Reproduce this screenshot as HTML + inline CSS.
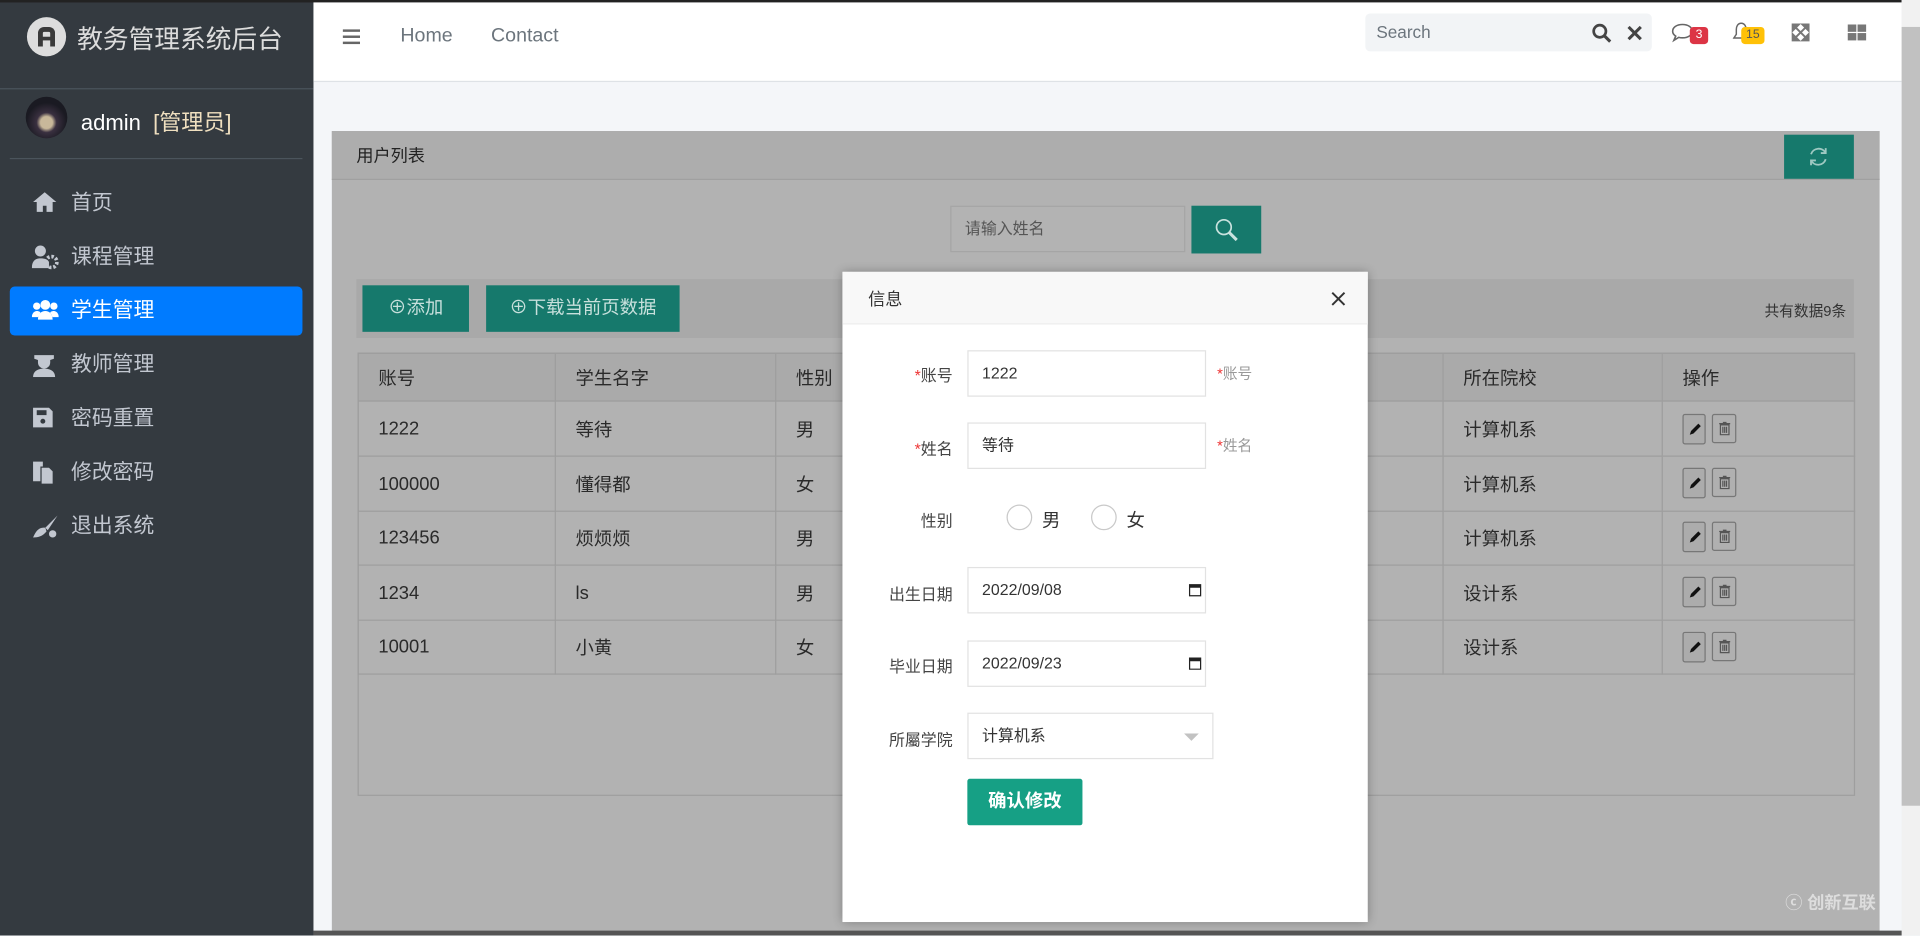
<!DOCTYPE html>
<html><head><meta charset="utf-8"><style>
*{box-sizing:border-box;margin:0;padding:0}
html,body{width:1920px;height:935px;overflow:hidden;background:#f4f6f9}
body{font-family:"Liberation Sans","Noto Sans CJK SC",sans-serif}
#w{position:absolute;left:0;top:0;width:1568px;height:764px;transform:scale(1.22449);transform-origin:0 0;background:#f4f6f9;overflow:hidden}
.a{position:absolute}
.side{left:0;top:0;width:256px;height:764px;background:#343a40;border-top:2px solid #222}
.nav{color:#c2c7d0;font-size:17px;left:8px;width:239px;height:40px;line-height:40px;padding-left:50px}
.nav svg{position:absolute;left:18px;top:10px}
.act{background:#007bff;color:#fff;border-radius:4px}
td,th{border:1px solid #9e9e9e;text-align:left;padding-left:16px;font-size:15px;color:#2a2a2a;font-weight:normal}
.lab{font-size:13px;color:#444;text-align:right;width:90px;left:0}
.inp{left:102px;width:195px;height:38px;border:1px solid #e2e2e2;font-size:13px;color:#333;line-height:36px;padding-left:11px;background:#fff}
.ob{width:20px;height:24px;border:1px solid #777;border-radius:2px;background:#b0b0b0}
</style></head><body><div id="w">
<div class="a side">
 <div class="a" style="left:22px;top:12px;width:32px;height:32px;border-radius:50%;background:#ddd"><div class="a" style="left:9px;top:8px;width:14px;height:16px;border:4px solid #3a3a3a;border-bottom:none;border-radius:5px 5px 0 0"></div><div class="a" style="left:10px;top:16px;width:12px;height:3px;background:#3a3a3a"></div></div>
 <div class="a" style="left:63px;top:14px;font-size:21px;color:#dcdcdc">教务管理系统后台</div>
 <div class="a" style="left:0;top:70px;width:256px;height:1px;background:#4b545c"></div>
 <div class="a" style="left:21px;top:77px;width:34px;height:34px;border-radius:50%;background:radial-gradient(circle at 50% 62%,#c8b89a 0 18%,#3a3040 30%,#1a1a22 60%)"></div>
 <div class="a" style="left:66px;top:84px;font-size:18px;color:#fff">admin&nbsp;&nbsp;<span style="color:#f0e0c0">[管理员]</span></div>
 <div class="a" style="left:8px;top:127px;width:239px;height:1px;background:#4b545c"></div>
 <div class="a nav" style="top:144px"><svg width="21" height="18" viewBox="0 0 21 18"><path d="M10.5 1L1 9h3v8h5v-5h3v5h5V9h3z" fill="#c2c7d0"/></svg>首页</div>
 <div class="a nav" style="top:188px"><svg width="22" height="20" viewBox="0 0 22 20"><circle cx="7" cy="5" r="4.5" fill="#c2c7d0"/><path d="M0 19c0-6 3-8 7-8s6 1 7 3v5z" fill="#c2c7d0"/><circle cx="16" cy="14" r="4.5" fill="none" stroke="#c2c7d0" stroke-width="3" stroke-dasharray="2 1.5"/></svg>课程管理</div>
 <div class="a nav act" style="top:232px"><svg width="22" height="18" viewBox="0 0 22 18"><circle cx="11" cy="5" r="4" fill="#fff"/><circle cx="4" cy="6" r="3" fill="#fff"/><circle cx="18" cy="6" r="3" fill="#fff"/><path d="M5 17c0-5 3-7 6-7s6 2 6 7zM0 15c0-3 2-5 4-5s3 1 3 1l-2 4zM22 15c0-3-2-5-4-5s-3 1-3 1l2 4z" fill="#fff"/></svg>学生管理</div>
 <div class="a nav" style="top:276px"><svg width="20" height="20" viewBox="0 0 20 20"><path d="M2 2h16v3l-3 1v2a5 5 0 0 1-10 0V6L2 5z" fill="#c2c7d0"/><path d="M1 20c0-5 4-7 9-7s9 2 9 7z" fill="#c2c7d0"/></svg>教师管理</div>
 <div class="a nav" style="top:320px"><svg width="18" height="18" viewBox="0 0 18 18"><path d="M1 1h13l3 3v13H1z" fill="#c2c7d0"/><rect x="4" y="3" width="8" height="4" fill="#343a40"/><circle cx="9" cy="12" r="2" fill="#343a40"/></svg>密码重置</div>
 <div class="a nav" style="top:364px"><svg width="18" height="20" viewBox="0 0 18 20"><path d="M1 1h8v4h-2v12H1z" fill="#c2c7d0"/><path d="M8 6h6l3 3v10H8z" fill="#c2c7d0"/></svg>修改密码</div>
 <div class="a nav" style="top:408px"><svg width="22" height="20" viewBox="0 0 22 20"><path d="M21 1L11 11l2 2z" fill="#c2c7d0"/><path d="M1 19c2-5 5-9 10-8l1 3c-3 4-7 5-11 5z" fill="#c2c7d0"/><circle cx="17" cy="16" r="3" fill="#c2c7d0"/></svg>退出系统</div>
</div>
<div class="a" style="left:256px;top:0;width:1297px;height:2px;background:#222"></div>
<div class="a" style="left:256px;top:2px;width:1297px;height:65px;background:#fff;border-bottom:1px solid #dee2e6">
 <div class="a" style="left:24px;top:22px;width:14px;height:2px;background:#666;box-shadow:0 5px #666,0 10px #666"></div>
 <div class="a" style="left:71px;top:19px;font-size:16px;color:#6c757d">Home</div>
 <div class="a" style="left:145px;top:19px;font-size:16px;color:#6c757d">Contact</div>
 <div class="a" style="left:859px;top:9px;width:234px;height:31px;background:#f2f4f6;border-radius:4px"><span class="a" style="left:9px;top:7px;font-size:14px;color:#6c757d">Search</span>
  <svg class="a" style="left:185px;top:8px" width="16" height="16" viewBox="0 0 16 16"><circle cx="6.5" cy="6.5" r="5" fill="none" stroke="#444" stroke-width="2.2"/><path d="M10 10l5 5" stroke="#444" stroke-width="2.5"/></svg>
  <svg class="a" style="left:214px;top:10px" width="12" height="12" viewBox="0 0 12 12"><path d="M1 1l10 10M11 1L1 11" stroke="#444" stroke-width="2.5"/></svg></div>
 <svg class="a" style="left:1109px;top:17px" width="18" height="16" viewBox="0 0 18 16"><path d="M9 1C4 1 1 3.5 1 6.5c0 1.8 1 3 2.5 4L2 14l4-2.5c1 .3 2 .4 3 .4 5 0 8-2.5 8-5.4S14 1 9 1z" fill="none" stroke="#666" stroke-width="1.3"/></svg>
 <div class="a" style="left:1124px;top:20px;width:15px;height:14px;background:#dc3545;border-radius:3px;color:#fff;font-size:10px;text-align:center;line-height:14px">3</div>
 <svg class="a" style="left:1159px;top:16px" width="14" height="16" viewBox="0 0 14 16"><path d="M7 1C4 1 3 4 3 6v4l-2 3h12l-2-3V6c0-2-1-5-4-5z" fill="none" stroke="#666" stroke-width="1.2"/></svg>
 <div class="a" style="left:1166px;top:20px;width:19px;height:14px;background:#ffc107;border-radius:3px;color:#555;font-size:10px;text-align:center;line-height:14px">15</div>
 <svg class="a" style="left:1207px;top:17px" width="15" height="15" viewBox="0 0 15 15"><path d="M1 1h5L1 6zM14 1v5L9 1zM1 14V9l5 5zM14 14H9l5-5zM3 3l9 9M12 3l-9 9" fill="#777" stroke="#777" stroke-width="1.6"/></svg>
 <div class="a" style="left:1253px;top:18px;width:7px;height:6px;background:#777;box-shadow:8px 0 #777,0 7px #777,8px 7px #777"></div>
</div>
<div class="a" style="left:1553px;top:0;width:15px;height:764px;background:#f1f1f1"></div>
<div class="a" style="left:1553px;top:22px;width:15px;height:636px;background:#c1c1c1"></div>
<div class="a" style="left:271px;top:107px;width:1264px;height:657px;background:#b2b2b2">
 <div class="a" style="left:0;top:0;width:1264px;height:40px;border-bottom:1px solid #a0a0a0;background:#adadad"></div>
 <div class="a" style="left:20px;top:10px;font-size:14px;color:#222">用户列表</div>
 <div class="a" style="left:1186px;top:3px;width:57px;height:36px;background:#16796c"><svg class="a" style="left:19px;top:9px" width="18" height="18" viewBox="0 0 18 18"><path d="M3 7a6.5 6.5 0 0 1 12-1M15 11a6.5 6.5 0 0 1-12 1" fill="none" stroke="#9fc9c2" stroke-width="1.5"/><path d="M15 2v4h-4M3 16v-4h4" fill="none" stroke="#9fc9c2" stroke-width="1.5"/></svg></div>
 <div class="a" style="left:505px;top:61px;width:192px;height:38px;border:1px solid #a5a5a5;background:#b3b3b3;font-size:13px;color:#555;line-height:36px;padding-left:11px">请输入姓名</div>
 <div class="a" style="left:702px;top:61px;width:57px;height:39px;background:#16796c"><svg class="a" style="left:19px;top:10px" width="19" height="19" viewBox="0 0 19 19"><circle cx="7.5" cy="7.5" r="6" fill="none" stroke="#c9e2de" stroke-width="1.4"/><path d="M12 12l6 6" stroke="#c9e2de" stroke-width="2.5"/></svg></div>
 <div class="a" style="left:20px;top:121px;width:1223px;height:48px;background:#a9a9a9"></div>
 <div class="a" style="left:25px;top:126px;width:87px;height:38px;background:#16796c;color:#c7e0dc;font-size:15px;line-height:38px;text-align:center">⊕添加</div>
 <div class="a" style="left:126px;top:126px;width:158px;height:38px;background:#16796c;color:#c7e0dc;font-size:15px;line-height:38px;text-align:center">⊕下载当前页数据</div>
 <div class="a" style="left:1170px;top:138px;font-size:12px;color:#333">共有数据9条</div>
 <div class="a" style="left:21px;top:181px;width:1223px;height:362px;border:1px solid #9e9e9e"></div>
 <table class="a" style="left:21px;top:181px;width:1223px;border-collapse:collapse">
  <tr style="height:39px;background:#aaa"><th style="width:161px">账号</th><th style="width:180px">学生名字</th><th style="width:545px">性别</th><th style="width:179px">所在院校</th><th>操作</th></tr>
  <tr style="height:45px"><td>1222</td><td>等待</td><td>男</td><td>计算机系</td><td></td></tr>
  <tr style="height:45px"><td>100000</td><td>懂得都</td><td>女</td><td>计算机系</td><td></td></tr>
  <tr style="height:44px"><td>123456</td><td>烦烦烦</td><td>男</td><td>计算机系</td><td></td></tr>
  <tr style="height:45px"><td>1234</td><td>ls</td><td>男</td><td>设计系</td><td></td></tr>
  <tr style="height:44px"><td>10001</td><td>小黄</td><td>女</td><td>设计系</td><td></td></tr>
 </table>
</div>
<div class="a" id="ops"></div>
<div class="a" style="left:688px;top:222px;width:429px;height:531px;background:#fff;box-shadow:0 0 8px rgba(0,0,0,.3)">
 <div class="a" style="left:0;top:0;width:429px;height:43px;background:#f8f8f8;border-bottom:1px solid #eee"></div>
 <div class="a" style="left:21px;top:12px;font-size:14px;color:#333">信息</div>
 <svg class="a" style="left:399px;top:16px" width="12" height="12" viewBox="0 0 12 12"><path d="M1 1l10 10M11 1L1 11" stroke="#333" stroke-width="1.6"/></svg>
 <div class="a lab" style="top:74px"><span style="color:#e33">*</span>账号</div>
 <div class="a inp" style="top:64px">1222</div>
 <div class="a" style="left:306px;top:74px;font-size:12px;color:#999"><span style="color:#e33">*</span>账号</div>
 <div class="a lab" style="top:134px"><span style="color:#e33">*</span>姓名</div>
 <div class="a inp" style="top:123px">等待</div>
 <div class="a" style="left:306px;top:133px;font-size:12px;color:#999"><span style="color:#e33">*</span>姓名</div>
 <div class="a lab" style="top:193px">性别</div>
 <div class="a" style="left:134px;top:190px;width:21px;height:21px;border:1.5px solid #c9c9c9;border-radius:50%"></div>
 <div class="a" style="left:163px;top:192px;font-size:15px;color:#333">男</div>
 <div class="a" style="left:203px;top:190px;width:21px;height:21px;border:1.5px solid #c9c9c9;border-radius:50%"></div>
 <div class="a" style="left:232px;top:192px;font-size:15px;color:#333">女</div>
 <div class="a lab" style="top:253px">出生日期</div>
 <div class="a inp" style="top:241px">2022/09/08<span class="a" style="left:180px;top:13px;width:10px;height:10px;border:1.5px solid #222;border-top-width:3px"></span></div>
 <div class="a lab" style="top:312px">毕业日期</div>
 <div class="a inp" style="top:301px">2022/09/23<span class="a" style="left:180px;top:13px;width:10px;height:10px;border:1.5px solid #222;border-top-width:3px"></span></div>
 <div class="a lab" style="top:372px">所屬学院</div>
 <div class="a inp" style="top:360px;width:201px">计算机系<span class="a" style="left:176px;top:16px;border:6px solid transparent;border-top-color:#c2c2c2"></span></div>
 <div class="a" style="left:102px;top:414px;width:94px;height:38px;background:#16a085;border-radius:2px;color:#fff;font-size:15px;font-weight:bold;text-align:center;line-height:38px">确认修改</div>
</div>
<div class="a" style="left:1458px;top:727px;font-size:14px;color:#ddd;font-weight:bold">ⓒ 创新互联</div>
<div class="a" style="left:256px;top:760px;width:1297px;height:4px;background:#555"></div>
</div>
<script>
var o=document.getElementById('ops'),ys=[338,382,426,471,516];
ys.forEach(function(y){o.innerHTML+='<div class="a ob" style="left:1374px;top:'+y+'px;width:19px;height:25px;background:#acacac"><svg class="a" style="left:4px;top:6px" width="11" height="11" viewBox="0 0 11 11"><path d="M1 10l1-3 6-6 2 2-6 6z" fill="#111"/></svg></div><div class="a ob" style="left:1398px;top:'+y+'px;width:20px;height:24px"><svg class="a" style="left:4px;top:5px" width="11" height="12" viewBox="0 0 11 12"><path d="M1 2h9M4 1h3M2 3h7v8H2zM4 4.5v5M5.5 4.5v5M7 4.5v5" fill="none" stroke="#555" stroke-width="1"/></svg></div>';});
</script>
</body></html>
